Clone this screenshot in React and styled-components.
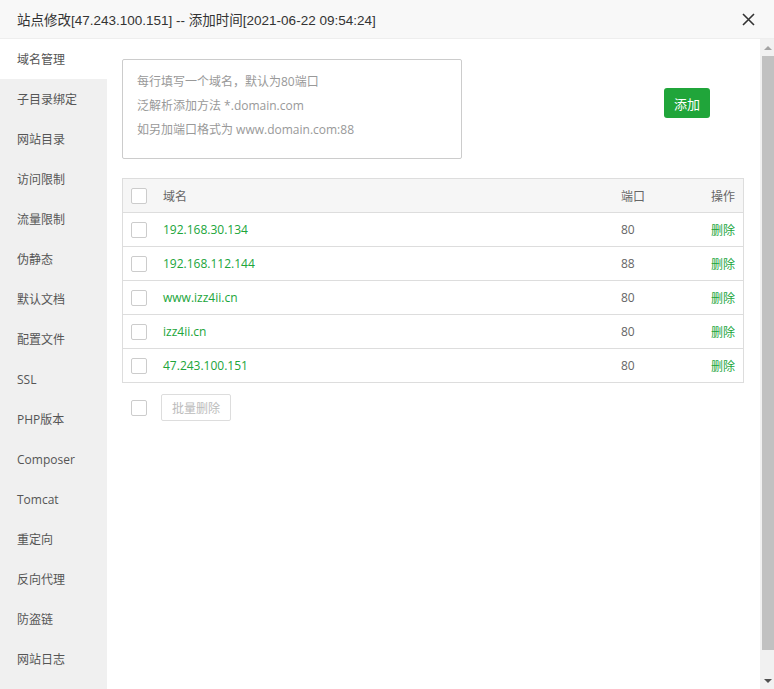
import React from "react";
import styled, { createGlobalStyle } from "styled-components";

const GlobalStyle = createGlobalStyle`
  html, body {
    margin: 0;
    padding: 0;
    height: 100%;
    overflow: hidden;
    background: #fff;
  }
  body {
    font-family: "Open Sans", "Noto Sans CJK SC", sans-serif;
    color: #333;
  }
  #root {
    height: 100%;
  }
`;

const menu = [
  "域名管理",
  "子目录绑定",
  "网站目录",
  "访问限制",
  "流量限制",
  "伪静态",
  "默认文档",
  "配置文件",
  "SSL",
  "PHP版本",
  "Composer",
  "Tomcat",
  "重定向",
  "反向代理",
  "防盗链",
  "网站日志",
];

const domains = [
  { name: "192.168.30.134", port: 80 },
  { name: "192.168.112.144", port: 88 },
  { name: "www.izz4ii.cn", port: 80 },
  { name: "izz4ii.cn", port: 80 },
  { name: "47.243.100.151", port: 80 },
];

export default function App() {
  return (
    <Dialog>
      <GlobalStyle />
      <Header>
        <Title>站点修改[47.243.100.151] -- 添加时间[2021-06-22 09:54:24]</Title>
        <Close aria-label="close">
          <svg width="13" height="13" viewBox="0 0 13 13">
            <path d="M1 1L12 12M12 1L1 12" stroke="#333" strokeWidth="1.6" fill="none" />
          </svg>
        </Close>
      </Header>
      <Body>
        <Sidebar>
          {menu.map((m, i) => (
            <MenuItem key={m} active={i === 0}>
              {m}
            </MenuItem>
          ))}
        </Sidebar>
        <Content>
          <AddRow>
            <HintBox>
              <Hint>每行填写一个域名，默认为80端口</Hint>
              <Hint>泛解析添加方法 *.domain.com</Hint>
              <Hint>如另加端口格式为 www.domain.com:88</Hint>
            </HintBox>
            <AddButton>添加</AddButton>
          </AddRow>
          <Table>
            <thead>
              <tr>
                <CheckCell as="th">
                  <Check />
                </CheckCell>
                <Th>域名</Th>
                <Th width="58px">端口</Th>
                <Th width="40px" align="right">
                  操作
                </Th>
              </tr>
            </thead>
            <tbody>
              {domains.map((d) => (
                <tr key={d.name}>
                  <CheckCell>
                    <Check />
                  </CheckCell>
                  <Td green>{d.name}</Td>
                  <Td>{d.port}</Td>
                  <Td green align="right">
                    删除
                  </Td>
                </tr>
              ))}
            </tbody>
          </Table>
          <Footer>
            <Check />
            <BatchButton>批量删除</BatchButton>
          </Footer>
        </Content>
        <ScrollTrack>
          <ScrollArrow>
            <svg width="8" height="4" viewBox="0 0 8 4">
              <path d="M0 4L4 0L8 4Z" fill="#a3a3a3" />
            </svg>
          </ScrollArrow>
          <ScrollThumb />
          <ScrollSpacer />
          <ScrollArrow>
            <svg width="8" height="4" viewBox="0 0 8 4">
              <path d="M0 0L8 0L4 4Z" fill="#505050" />
            </svg>
          </ScrollArrow>
        </ScrollTrack>
      </Body>
    </Dialog>
  );
}

const Dialog = styled.div`
  display: flex;
  flex-direction: column;
  height: 100%;
  background: #fff;
`;

const Header = styled.div`
  height: 38px;
  flex-shrink: 0;
  display: flex;
  align-items: center;
  justify-content: space-between;
  padding: 0 19px 0 17px;
  background: #f8f8f8;
  border-bottom: 1px solid #eee;
`;

const Title = styled.div`
  font-family: "Liberation Sans", "Noto Sans CJK SC", sans-serif;
  font-size: 13.5px;
  color: #333;
`;

const Close = styled.div`
  display: flex;
  align-items: center;
  cursor: pointer;
`;

const Body = styled.div`
  flex: 1;
  display: flex;
  overflow: hidden;
  min-height: 0;
`;

const Sidebar = styled.div`
  width: 107px;
  flex-shrink: 0;
  background: #f0f0f0;
`;

const MenuItem = styled.div`
  height: 40px;
  line-height: 42px;
  overflow: hidden;
  padding-left: 17px;
  font-size: 12px;
  color: #555;
  background: ${(p) => (p.active ? "#fff" : "transparent")};
  cursor: pointer;
`;

const Content = styled.div`
  flex: 1;
  padding: 20px 16px 0 15px;
`;

const AddRow = styled.div`
  display: flex;
  align-items: flex-start;
`;

const HintBox = styled.div`
  border: 1px solid #ccc;
  border-radius: 2px;
  padding: 10px 14px 0;
  width: 310px;
  height: 88px;
`;

const Hint = styled.div`
  font-size: 12px;
  line-height: 24px;
  color: #999;
`;

const AddButton = styled.button`
  margin: 29px 0 0 202px;
  width: 46px;
  height: 30px;
  border: none;
  border-radius: 3px;
  background: #20a53a;
  color: #fff;
  font-family: "Noto Sans CJK SC", sans-serif;
  font-size: 13px;
  padding: 0;
  cursor: pointer;
`;

const Table = styled.table`
  width: 100%;
  margin-top: 19px;
  border-collapse: collapse;
  border: 1px solid #ddd;
  font-size: 12px;

  thead tr {
    background: #f6f6f6;
  }
  tr {
    height: 34px;
    border-bottom: 1px solid #ddd;
  }
`;

const Th = styled.th`
  font-weight: normal;
  color: #666;
  text-align: ${(p) => p.align || "left"};
  width: ${(p) => p.width || "auto"};
  padding: 0 8px;
`;

const Td = styled.td`
  color: ${(p) => (p.green ? "#20a53a" : "#666")};
  text-align: ${(p) => p.align || "left"};
  padding: 0 8px;
`;

const CheckCell = styled.td`
  width: 16px;
  padding: 0 8px;
  vertical-align: middle;
  line-height: 0;
`;

const Check = styled.span`
  display: inline-block;
  width: 14px;
  height: 14px;
  border: 1px solid #ccc;
  border-radius: 2px;
  background: #fff;
`;

const Footer = styled.div`
  display: flex;
  align-items: center;
  gap: 14px;
  margin-top: 11px;
  padding-left: 9px;
`;

const BatchButton = styled.button`
  height: 27px;
  width: 70px;
  border: 1px solid #ddd;
  border-radius: 2px;
  background: #fff;
  color: #bbb;
  font-family: "Noto Sans CJK SC", sans-serif;
  font-size: 12px;
  padding: 0;
`;

const ScrollTrack = styled.div`
  width: 14px;
  flex-shrink: 0;
  display: flex;
  flex-direction: column;
  background: #f1f1f1;
`;

const ScrollArrow = styled.div`
  height: 17px;
  flex-shrink: 0;
  display: flex;
  align-items: center;
  justify-content: center;
  padding-left: 2px;
`;

const ScrollThumb = styled.div`
  height: 594px;
  flex-shrink: 0;
  margin-left: 2px;
  background: #c1c1c1;
`;

const ScrollSpacer = styled.div`
  flex: 1;
`;
